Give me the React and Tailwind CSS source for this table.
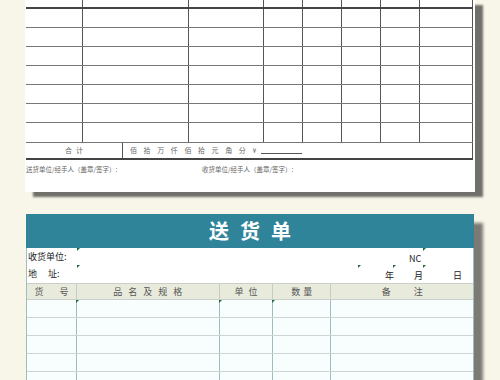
import React from "react";

const font = { fontFamily: '"Noto Sans CJK SC", "Noto Sans", sans-serif' };

// column widths of the upper (old) sheet, borders included
const topCols = [
  "w-[57px]",
  "w-[106px]",
  "w-[75px]",
  "w-[39px]",
  "w-[39px]",
  "w-[39px]",
  "w-[39px]",
  "w-[53px]",
];

// row heights of the upper sheet (first row is cut off by the window)
const topRows = [
  "h-[9px] border-b-2 border-[#444]",
  "h-[19px] border-b border-[#777]",
  "h-[19px] border-b border-[#777]",
  "h-[19px] border-b border-[#777]",
  "h-[19px] border-b border-[#777]",
  "h-[19px] border-b border-[#777]",
  "h-[19px] border-b border-[#777]",
  "h-[20px] border-b border-[#777]",
];

const bottomCols = [
  { w: "w-[50px]", label: "货 号", track: "tracking-[7px] pl-[7px]", mark: false },
  { w: "w-[143px]", label: "品名及规格", track: "tracking-[6px] pl-[6px]", mark: true },
  { w: "w-[54px]", label: "单位", track: "tracking-[5px] pl-[5px]", mark: true },
  { w: "w-[58px]", label: "数量", track: "tracking-[3px] pl-[3px]", mark: true },
  { w: "w-[142px]", label: "备注", track: "tracking-[23px] pl-[23px]", mark: false },
];

function Mark({ className }) {
  return (
    <svg
      width="3"
      height="3"
      viewBox="0 0 3 3"
      className={"absolute " + className}
    >
      <polygon points="0,0 3,0 0,3" fill="#1d6b3a" />
    </svg>
  );
}

function OldSheet() {
  return (
    <div className="ml-[25px] w-[450px] bg-white shadow-[8px_5px_2px_rgba(0,0,0,0.55)]">
      <div className="pl-[1px]">
        {topRows.map((row, i) => (
          <div key={i} className={"flex w-[447px] " + row}>
            {topCols.map((c, j) => (
              <div key={j} className={c + " h-full border-r border-[#555]"} />
            ))}
          </div>
        ))}

        {/* 合计 row */}
        <div className="flex w-[447px] h-[17px] border-b-2 border-[#444] text-[7px] text-[#666]">
          <div className="w-[97px] h-full border-r border-[#555] flex items-center justify-center tracking-[4px] pl-[4px]">
            合计
          </div>
          <div className="flex-1 h-full border-r border-[#555] flex items-center pl-[7px]">
            <span className="tracking-[6.6px]">佰拾万仟佰拾元角分¥</span>
            <span className="w-[41px] border-b border-[#555] mt-[6px] -ml-[2px]" />
          </div>
        </div>
      </div>

      <div className="h-[32px] flex text-[6.5px] text-[#666] pt-[5px] pl-[1px]">
        <span className="w-[176px]">送货单位/经手人（盖章/签字）:</span>
        <span>收货单位/经手人（盖章/签字）:</span>
      </div>
    </div>
  );
}

function DeliveryNote() {
  return (
    <div className="mt-[22px] ml-[26px] w-[448px] shadow-[9px_9px_3px_rgba(0,0,0,0.5)]">
      <div className="h-[34px] bg-[#2f8499] flex items-center justify-center">
        <span className="text-[20px] font-bold text-white tracking-[11px] pl-[11px] leading-none">
          送货单
        </span>
      </div>

      <div className="bg-white border-l border-r border-[#9dbdc2] text-[9px] text-[#222]">
        {/* info rows */}
        <div className="relative h-[17px] flex items-center pl-[1px]">
          <span>收货单位:</span>
          <span className="absolute left-[382px] top-[4px]">NC</span>
          <Mark className="left-[50px] top-0" />
          <Mark className="left-[396px] top-0" />
        </div>
        <div className="relative h-[18px] flex items-center pl-[1px]">
          <span>地</span>
          <span className="ml-[11px]">址:</span>
          <span className="absolute left-[358px] top-[4px]">年</span>
          <span className="absolute left-[387px] top-[4px]">月</span>
          <span className="absolute left-[426px] top-[4px]">日</span>
          <Mark className="left-[50px] top-0" />
          <Mark className="left-[331px] top-0" />
          <Mark className="left-[366px] top-0" />
          <Mark className="left-[396px] top-0" />
        </div>

        {/* column header */}
        <div className="flex h-[17px] bg-[#e8ebdc] border-t border-b border-[#c9cfc9] text-[#555]">
          {bottomCols.map((c, i) => (
            <div
              key={i}
              className={
                c.w +
                " h-full flex items-center justify-center " +
                (i < bottomCols.length - 1 ? "border-r border-[#c2cdc6]" : "")
              }
            >
              <span className={c.track}>{c.label}</span>
            </div>
          ))}
        </div>

        {/* data rows */}
        {[0, 1, 2, 3, 4].map((r) => (
          <div key={r} className="flex h-[18px] bg-[#f8fdfd] border-b border-[#cdd3d3]">
            {bottomCols.map((c, i) => (
              <div
                key={i}
                className={
                  c.w +
                  " relative h-full " +
                  (i < bottomCols.length - 1 ? "border-r border-[#9dbdc2]" : "")
                }
              >
                {r === 0 && i > 0 && i < 4 && <Mark className="-left-px top-0" />}
              </div>
            ))}
          </div>
        ))}
      </div>
    </div>
  );
}

export default function App() {
  return (
    <div className="w-[500px] h-[380px] overflow-hidden bg-[#f8f5e9]" style={font}>
      <OldSheet />
      <DeliveryNote />
    </div>
  );
}
